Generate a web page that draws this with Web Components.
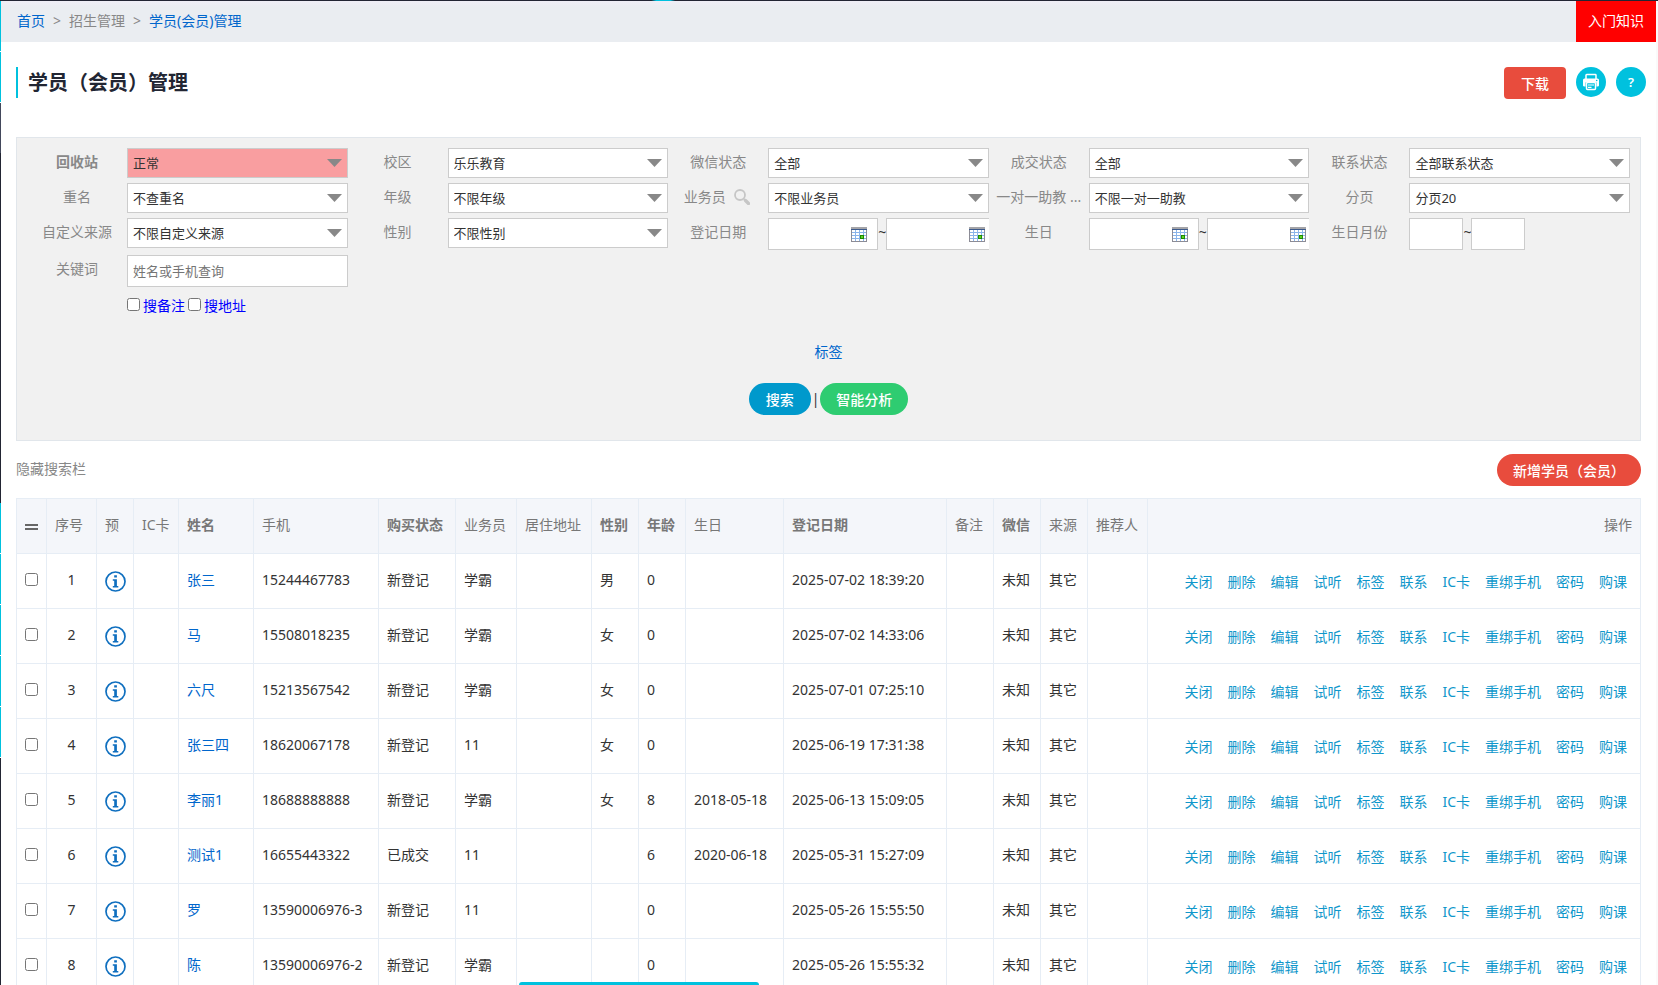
<!DOCTYPE html>
<html lang="zh-CN">
<head>
<meta charset="utf-8">
<meta name="viewport" content="width=device-width, initial-scale=1">
<title>学员（会员）管理</title>
<style>
  :root {
    --cyan: #00c1de;
    --red: #e84c3d;
    --link: #0066cc;
    --muted: #888;
    --line: #e6edf5;
    --dark: #222533;
  }
  body {
    margin: 0;
    background: #fff;
    color: #333;
    font: 14px/20px "Noto Sans", "Noto Sans CJK SC", sans-serif;
  }
</style>
</head>
<body>

<app-shell>
  <crumb-bar></crumb-bar>
  <page-title heading="学员（会员）管理"></page-title>
  <filter-panel>
    <filter-select label="回收站" value="正常" alert></filter-select>
    <filter-select label="校区" value="乐乐教育"></filter-select>
    <filter-select label="微信状态" value="全部"></filter-select>
    <filter-select label="成交状态" value="全部"></filter-select>
    <filter-select label="联系状态" value="全部联系状态"></filter-select>
    <filter-select label="重名" value="不查重名"></filter-select>
    <filter-select label="年级" value="不限年级"></filter-select>
    <filter-select label="业务员" value="不限业务员" lookup></filter-select>
    <filter-select label="一对一助教 ..." value="不限一对一助教"></filter-select>
    <filter-select label="分页" value="分页20"></filter-select>
    <filter-select label="自定义来源" value="不限自定义来源"></filter-select>
    <filter-select label="性别" value="不限性别"></filter-select>
    <filter-range label="登记日期" kind="date"></filter-range>
    <filter-range label="生日" kind="date"></filter-range>
    <filter-range label="生日月份" kind="month"></filter-range>
    <filter-keyword></filter-keyword>
  </filter-panel>
  <list-toolbar></list-toolbar>
  <member-table></member-table>
</app-shell>

<script>
// ── Shared helpers ─────────────────────────────────────────

const FIELD_CSS = `
  :host { display: block; min-width: 0; }
  .field { display: grid; grid-template-columns: 100px minmax(0, 1fr); }
  .label {
    display: flex;
    align-items: center;
    justify-content: center;
    gap: 8px;
    height: 28px;
    color: var(--muted);
    white-space: nowrap;
  }
  input[type=text], select {
    box-sizing: border-box;
    margin: 0;
    border: 1px solid #ccc;
    border-radius: 0;
    background: #fff;
    color: #333;
    font-family: inherit;
    font-size: 13px;
    padding: 0 5px;
  }
  input[type=text] { height: 32px; }
`;

class BaseElement extends HTMLElement {
  constructor() {
    super();
    this.attachShadow({ mode: 'open' });
  }

  connectedCallback() {
    this.shadowRoot.innerHTML = this.render();
  }
}

// ── Frame: side rail, top line, scroll area, bottom tip ────

class AppShell extends BaseElement {
  render() {
    const groups = ['on', 'on', 'mid', 'off', 'on', 'on', 'on', 'on', 'on', 'rest'];
    return `
      <style>
        :host {
          display: grid;
          grid-template-columns: 1px minmax(0, 1fr) 2px;
          grid-template-rows: 1px minmax(0, 1fr);
          height: 100vh;
          overflow: hidden;
        }
        .top {
          grid-column: 1 / -1;
          background: radial-gradient(ellipse 12px 4px at 40% 0, var(--cyan) 60%, transparent) , var(--dark);
        }
        .rail { display: flex; flex-direction: column; }
        .rail i { flex: none; height: 50px; border-bottom: 1px solid #fff; background: var(--cyan); }
        .rail .mid { background: #42485b; border: 0; }
        .rail .off { background: var(--dark); height: 350px; border: 0; }
        .rail .rest { background: var(--dark); flex: 1; border: 0; }
        main { overflow: hidden; }
        .edge { background: #fafafa; }
        .tip {
          position: fixed;
          left: 519px;
          bottom: 0;
          width: 240px;
          height: 3px;
          border-radius: 4px 4px 0 0;
          background: var(--cyan);
        }
      </style>
      <div class="top"></div>
      <div class="rail">${groups.map(g => `<i class="${g}"></i>`).join('')}</div>
      <main><slot></slot></main>
      <div class="edge"></div>
      <div class="tip"></div>
    `;
  }
}

class CrumbBar extends BaseElement {
  render() {
    return `
      <style>
        :host {
          display: flex;
          justify-content: space-between;
          height: 41px;
          background: linear-gradient(#efeef6, #eaedf1 6px);
        }
        nav, .guide { display: flex; align-items: center; padding-bottom: 2px; }
        nav { gap: 8px; padding-left: 16px; color: var(--muted); }
        nav a { color: var(--link); text-decoration: none; }
        .guide {
          justify-content: center;
          width: 80px;
          background: #f00;
          color: #fff;
          text-decoration: none;
        }
      </style>
      <nav>
        <a href="#home">首页</a><span>&gt;</span><span>招生管理</span><span>&gt;</span><a href="#members">学员(会员)管理</a>
      </nav>
      <a class="guide" href="#guide">入门知识</a>
    `;
  }
}

class PageTitle extends BaseElement {
  render() {
    return `
      <style>
        :host {
          display: flex;
          align-items: flex-start;
          justify-content: space-between;
          padding: 25px 10px 38px 15px;
        }
        h1 {
          margin: 0;
          border-left: 2px solid var(--cyan);
          padding-left: 10px;
          height: 31px;
          font-size: 20px;
          line-height: 31px;
          font-weight: 700;
          color: #222633;
        }
        .tools { display: flex; gap: 10px; }
        .round {
          display: flex;
          align-items: center;
          justify-content: center;
          width: 30px;
          height: 30px;
          border: 0;
          border-radius: 50%;
          padding: 0;
          background: var(--cyan);
          color: #fff;
          font-family: inherit;
          font-size: 13px;
          font-weight: 600;
        }
      </style>
      <h1>${this.getAttribute('heading')}</h1>
      <div class="tools">
        <pill-button tone="red" square>下载</pill-button>
        <button class="round" aria-label="打印">
          <svg width="18" height="18" viewBox="0 0 18 18" fill="none">
            <path d="M4 6V2.200Q4 1.500 4.700 1.500H13.300Q14 1.500 14 2.200V6" stroke="#fff" stroke-width="1.500"/>
            <path d="M2.500 5.500H15.500Q17 5.500 17 7V12.500Q17 13.500 15.500 13.500H14.500V9.500H3.500V13.500H2.500Q1 13.500 1 12.500V7Q1 5.500 2.500 5.500Z" fill="#fff"/>
            <rect x="4.500" y="9.500" width="9" height="7" rx="1" fill="#00c1de" stroke="#fff" stroke-width="1.500"/>
            <path d="M6 12H12M6 14.300H9.500" stroke="#fff" stroke-width="1.200"/>
            <circle cx="14.700" cy="7.500" r=".8" fill="#00c1de"/>
          </svg>
        </button>
        <button class="round" aria-label="帮助">?</button>
      </div>
    `;
  }
}

class PillButton extends BaseElement {
  render() {
    const tones = { red: 'var(--red)', blue: '#0099cc', green: '#2ecc71' };
    return `
      <style>
        :host { display: inline-flex; }
        button {
          min-width: 62px;
          height: 32px;
          border: 0;
          border-radius: ${this.hasAttribute('square') ? 4 : 16}px;
          padding: 2px 16px 0;
          background: ${tones[this.getAttribute('tone')]};
          color: #fff;
          font-family: inherit;
          font-size: 14px;
          line-height: 20px;
          font-weight: 500;
          white-space: nowrap;
        }
      </style>
      <button><slot></slot></button>
    `;
  }
}

// ── Search filters ─────────────────────────────────────────

class FilterPanel extends BaseElement {
  render() {
    return `
      <style>
        :host {
          display: block;
          margin: 0 15px;
          border: 1px solid #e1e6eb;
          padding: 10px 10px 25px;
          background: #f1f1f1;
        }
        .grid { display: grid; grid-template-columns: repeat(5, minmax(0, 1fr)); row-gap: 5px; }
        .tags { margin-top: 26px; text-align: center; }
        .tags a { color: var(--link); text-decoration: none; }
        .actions { display: flex; align-items: center; justify-content: center; gap: 1px; margin-top: 21px; }
      </style>
      <div class="grid"><slot></slot></div>
      <div class="tags"><a href="#tags">标签</a></div>
      <div class="actions">
        <pill-button tone="blue">搜索</pill-button>
        <span>|</span>
        <pill-button tone="green">智能分析</pill-button>
      </div>
    `;
  }
}

class FilterSelect extends BaseElement {
  render() {
    const lookup = this.hasAttribute('lookup') ? `
      <svg width="16" height="16" viewBox="0 0 16 16" fill="none" stroke="#c6c6c6">
        <circle cx="6" cy="6" r="5" stroke-width="1.800"/>
        <path d="M10 10L11.500 11.500" stroke-width="1.800"/>
        <path d="M11.500 11.500L14.500 14.500" stroke-width="3.400" stroke-linecap="round"/>
      </svg>` : '';
    return `
      <style>
        ${FIELD_CSS}
        .label svg { margin-right: 3px; }
        .box { display: grid; }
        .box > * { grid-area: 1 / 1; }
        select { appearance: none; width: 100%; height: 30px; }
        .box svg { justify-self: end; align-self: center; margin-right: 6px; pointer-events: none; }
        :host([alert]) .label { font-weight: 700; }
        :host([alert]) select { background: #f99ea0; }
      </style>
      <div class="field">
        <label class="label" for="f">${this.getAttribute('label')}${lookup}</label>
        <div class="box">
          <select id="f"><option>${this.getAttribute('value')}</option></select>
          <svg width="15" height="8" viewBox="0 0 15 8"><path d="M0 0H15L7.500 8Z" fill="#888"/></svg>
        </div>
      </div>
    `;
  }
}

class FilterRange extends BaseElement {
  render() {
    const label = this.getAttribute('label');
    const isDate = this.getAttribute('kind') === 'date';
    const icon = isDate ? `
      <svg width="16" height="15" viewBox="0 0 16 15" shape-rendering="crispEdges">
        <path d="M0 0H16V15H0Z" fill="#8c8c96"/>
        <path d="M1 3H15V14H1Z" fill="#fff"/>
        <path d="M0 0H16V2H0Z" fill="#a4a4a8"/>
        <path d="M0 2H16V3H0Z" fill="#3d5a8c"/>
        <path d="M4 3V14M8 3V14M12 3V14M1 5.500H15M1 8.500H15M1 11.500H15" stroke="#8ab4ea"/>
        <path d="M9 8H13V12H9Z" fill="#1f8a00"/>
        <path d="M10 9H12V11H10Z" fill="#5fd62a"/>
      </svg>` : '';
    const box = (id, name) => `<div class="box"><input type="text" id="${id}" aria-label="${name}">${icon}</div>`;
    return `
      <style>
        ${FIELD_CSS}
        .range { display: flex; overflow: hidden; color: #333; }
        .range span { flex: none; width: 8px; line-height: 28px; text-align: center; }
        .box { display: grid; flex: none; width: ${isDate ? 110 : 54}px; }
        .box > * { grid-area: 1 / 1; min-width: 0; }
        .box svg { justify-self: end; align-self: center; margin-right: 11px; }
      </style>
      <div class="field">
        <label class="label" for="from">${label}</label>
        <div class="range">${box('from', label + '起')}<span>~</span>${box('to', label + '止')}</div>
      </div>
    `;
  }
}

class FilterKeyword extends BaseElement {
  render() {
    return `
      <style>
        ${FIELD_CSS}
        #kw { display: block; width: 100%; }
        #kw::placeholder { color: #757575; }
        .checks { display: flex; align-items: center; gap: 3px; margin-top: 9px; color: #00f; }
        .checks input { width: 13px; height: 13px; margin: 0 0 3px; }
      </style>
      <div class="field">
        <label class="label" for="kw">关键词</label>
        <div>
          <input type="text" id="kw" placeholder="姓名或手机查询">
          <div class="checks">
            <input type="checkbox" id="note"><label for="note">搜备注</label>
            <input type="checkbox" id="addr"><label for="addr">搜地址</label>
          </div>
        </div>
      </div>
    `;
  }
}

// ── Member list ────────────────────────────────────────────

class ListToolbar extends BaseElement {
  render() {
    return `
      <style>
        :host { display: flex; align-items: center; justify-content: space-between; padding: 13px 15px 12px; }
        a { padding-bottom: 2px; color: var(--muted); text-decoration: none; }
      </style>
      <a href="#toggle">隐藏搜索栏</a>
      <pill-button tone="red">新增学员（会员）</pill-button>
    `;
  }
}

// [title, width, sortable]
const COLUMNS = [
  ['序号', 50], ['预', 37], ['IC卡', 45], ['姓名', 75, true], ['手机', 125], ['购买状态', 77, true],
  ['业务员', 61], ['居住地址', 75], ['性别', 47, true], ['年龄', 47, true], ['生日', 98],
  ['登记日期', 163, true], ['备注', 47], ['微信', 47, true], ['来源', 47], ['推荐人', 60]
];

// [name, phone, status, sales, gender, age, birthday, registered]
const MEMBERS = [
  ['张三', '15244467783', '新登记', '学霸', '男', '0', '', '2025-07-02 18:39:20'],
  ['马', '15508018235', '新登记', '学霸', '女', '0', '', '2025-07-02 14:33:06'],
  ['六尺', '15213567542', '新登记', '学霸', '女', '0', '', '2025-07-01 07:25:10'],
  ['张三四', '18620067178', '新登记', '11', '女', '0', '', '2025-06-19 17:31:38'],
  ['李丽1', '18688888888', '新登记', '学霸', '女', '8', '2018-05-18', '2025-06-13 15:09:05'],
  ['测试1', '16655443322', '已成交', '11', '', '6', '2020-06-18', '2025-05-31 15:27:09'],
  ['罗', '13590006976-3', '新登记', '11', '', '0', '', '2025-05-26 15:55:50'],
  ['陈', '13590006976-2', '新登记', '学霸', '', '0', '', '2025-05-26 15:55:32']
];

const ACTIONS = ['关闭', '删除', '编辑', '试听', '标签', '联系', 'IC卡', '重绑手机', '密码', '购课'];

class MemberTable extends BaseElement {
  _row([name, phone, status, sales, gender, age, birthday, registered], i) {
    return `
      <tr>
        <td><input type="checkbox" aria-label="选择${name}"></td>
        <td class="no">${i + 1}</td>
        <td>
          <a href="#preview" aria-label="预览">
            <svg width="21" height="21" viewBox="0 0 21 21">
              <circle cx="10.500" cy="10.500" r="9.500" fill="none" stroke="#0f6fbf" stroke-width="1.700"/>
              <path d="M9.200 4.300H11.900V6.600H9.200ZM7.800 8.300H11.900V15H13.300V16.400H7.800V15H9.200V9.700H7.800Z" fill="#0f6fbf"/>
            </svg>
          </a>
        </td>
        <td></td>
        <td><a class="name" href="#member">${name}</a></td>
        <td>${phone}</td>
        <td>${status}</td>
        <td>${sales}</td>
        <td></td>
        <td>${gender}</td>
        <td>${age}</td>
        <td>${birthday}</td>
        <td>${registered}</td>
        <td></td>
        <td>未知</td>
        <td>其它</td>
        <td></td>
        <td><div class="ops">${ACTIONS.map(a => `<a href="#op">${a}</a>`).join('')}</div></td>
      </tr>
    `;
  }

  render() {
    return `
      <style>
        :host { display: block; padding: 0 15px; }
        table {
          width: 100%;
          table-layout: fixed;
          border-collapse: separate;
          border-spacing: 0;
          border-top: 1px solid var(--line);
          border-left: 1px solid var(--line);
        }
        th, td {
          box-sizing: border-box;
          height: 55px;
          padding: 0 8px 2px;
          border-right: 1px solid var(--line);
          border-bottom: 1px solid var(--line);
          text-align: left;
          vertical-align: middle;
          white-space: nowrap;
        }
        th { background: #f4f6fa; color: #777; font-weight: 400; }
        th.sort { font-weight: 700; }
        th:last-child { text-align: right; }
        .no { text-align: center; }
        .menu { display: block; width: 13px; height: 2px; margin-top: 4px; border: solid #666; border-width: 2px 0; }
        input { display: block; width: 13px; height: 13px; margin: 0 0 2px; }
        svg { display: block; margin-top: 3px; }
        a { text-decoration: none; }
        .name { color: var(--link); }
        .ops { display: flex; justify-content: flex-end; gap: 15px; padding: 4px 5px 0 0; }
        .ops a { color: #0f97cb; }
      </style>
      <table>
        <colgroup>
          <col style="width:30px">${COLUMNS.map(c => `<col style="width:${c[1]}px">`).join('')}<col>
        </colgroup>
        <thead>
          <tr>
            <th><span class="menu"></span></th>
            ${COLUMNS.map(([title, , sort]) => `<th${sort ? ' class="sort"' : ''}>${title}</th>`).join('')}
            <th>操作</th>
          </tr>
        </thead>
        <tbody>${MEMBERS.map((m, i) => this._row(m, i)).join('')}</tbody>
      </table>
    `;
  }
}

customElements.define('app-shell', AppShell);
customElements.define('crumb-bar', CrumbBar);
customElements.define('page-title', PageTitle);
customElements.define('pill-button', PillButton);
customElements.define('filter-panel', FilterPanel);
customElements.define('filter-select', FilterSelect);
customElements.define('filter-range', FilterRange);
customElements.define('filter-keyword', FilterKeyword);
customElements.define('list-toolbar', ListToolbar);
customElements.define('member-table', MemberTable);
</script>
</body>
</html>
